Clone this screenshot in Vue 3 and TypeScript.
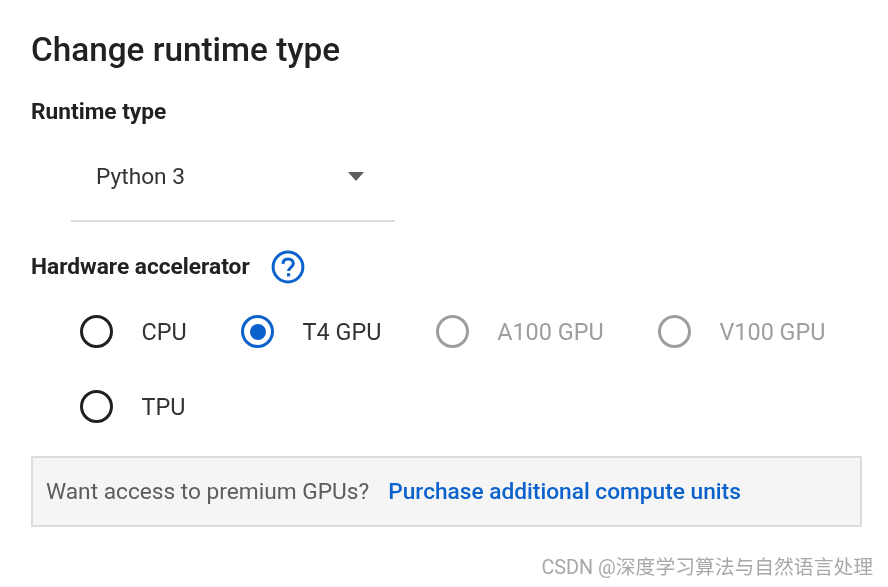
<template>
  <div class="dialog">
    <h1 class="title">Change runtime type</h1>
    <h2 class="label runtime-label">Runtime type</h2>
    <div class="select">
      <span>Python 3</span>
      <i class="arrow"></i>
    </div>
    <div class="hw-head">
      <h2 class="label">Hardware accelerator</h2>
      <svg class="help" width="34" height="34" viewBox="0 0 34 34">
        <circle cx="17" cy="17" r="14.9" fill="none" stroke="#0b62cc" stroke-width="3" />
        <path d="M11.9 13.8c.2-3 2.200-4.800 5.200-4.800s5.200 1.800 5.200 4.500c0 3.800-4.700 3.800-4.700 7.600" fill="none" stroke="#0b62cc" stroke-width="3" />
        <rect x="16" y="23.200" width="3.200" height="3.200" fill="#0b62cc" />
      </svg>
    </div>
    <div class="radios">
      <label v-for="item in options" :key="item.name" class="radio" :class="{ on: item.name === selected, off: item.disabled }">
        <span class="ring"></span>
        <span>{{ item.name }}</span>
      </label>
    </div>
    <div class="notice">
      <span>Want access to premium GPUs?</span>
      <a class="link">Purchase additional compute units</a>
    </div>
    <div class="mark">CSDN @深度学习算法与自然语言处理</div>
  </div>
</template>

<script setup lang="ts">
interface Option {
  name: string
  disabled?: boolean
}

const selected = 'T4 GPU'
const options: Option[] = [
  { name: 'CPU' },
  { name: 'T4 GPU' },
  { name: 'A100 GPU', disabled: true },
  { name: 'V100 GPU', disabled: true },
  { name: 'TPU' }
]
</script>

<style>
html,
body {
  background: #fff;
  overflow: hidden;
}
</style>

<style scoped>
.dialog {
  width: 888px;
  height: 587px;
  box-sizing: border-box;
  padding: 31px 26px 0 31px;
  font-family: Roboto, "Noto Sans CJK SC", sans-serif;
  color: #212121;
  filter: blur(0.4px);
}

.title {
  margin: 0;
  font-size: 33.3px;
  line-height: 38px;
  font-weight: 500;
}

.label {
  margin: 0;
  font-size: 22.7px;
  line-height: 28px;
  font-weight: 700;
}

.runtime-label {
  margin-top: 29px;
}

.select {
  margin: 22px 0 0 40px;
  width: 324px;
  height: 74px;
  box-sizing: border-box;
  padding: 0 31px 15px 25px;
  display: flex;
  align-items: center;
  justify-content: space-between;
  border-bottom: 2px solid #dcdcdc;
  font-size: 22.7px;
  color: #333;
}

.arrow {
  width: 0;
  height: 0;
  border-left: 8.5px solid transparent;
  border-right: 8.5px solid transparent;
  border-top: 9px solid #5f5f5f;
}

.hw-head {
  margin-top: 28px;
  display: flex;
  align-items: center;
  gap: 21px;
}

.radios {
  margin: 31px 0 0 49px;
  display: flex;
  flex-wrap: wrap;
  column-gap: 54.4px;
  row-gap: 42px;
}

.radio {
  display: flex;
  align-items: center;
  gap: 28.5px;
  height: 33px;
  font-size: 23.4px;
  color: #333;
}

.ring {
  width: 33px;
  height: 33px;
  box-sizing: border-box;
  border: 3.2px solid #212121;
  border-radius: 50%;
  display: grid;
  place-items: center;
}

.radio.on .ring {
  border-color: #0b62cc;
}

.radio.on .ring::after {
  content: '';
  width: 16px;
  height: 16px;
  border-radius: 50%;
  background: #0b62cc;
}

.radio.off {
  color: #9e9e9e;
}

.radio.off .ring {
  border-color: #9e9e9e;
}

.notice {
  margin-top: 33px;
  width: 831px;
  height: 71px;
  box-sizing: border-box;
  padding-left: 13px;
  display: flex;
  align-items: center;
  gap: 19px;
  background: #f5f5f5;
  border: 2px solid #dcdcdc;
  font-size: 22.7px;
  color: #5c5c5c;
}

.link {
  color: #0b62cc;
  font-weight: 500;
}

.mark {
  margin-top: 29px;
  margin-right: -11px;
  text-align: right;
  font-size: 19.8px;
  line-height: 24px;
  color: #a8a8a8;
}
</style>
